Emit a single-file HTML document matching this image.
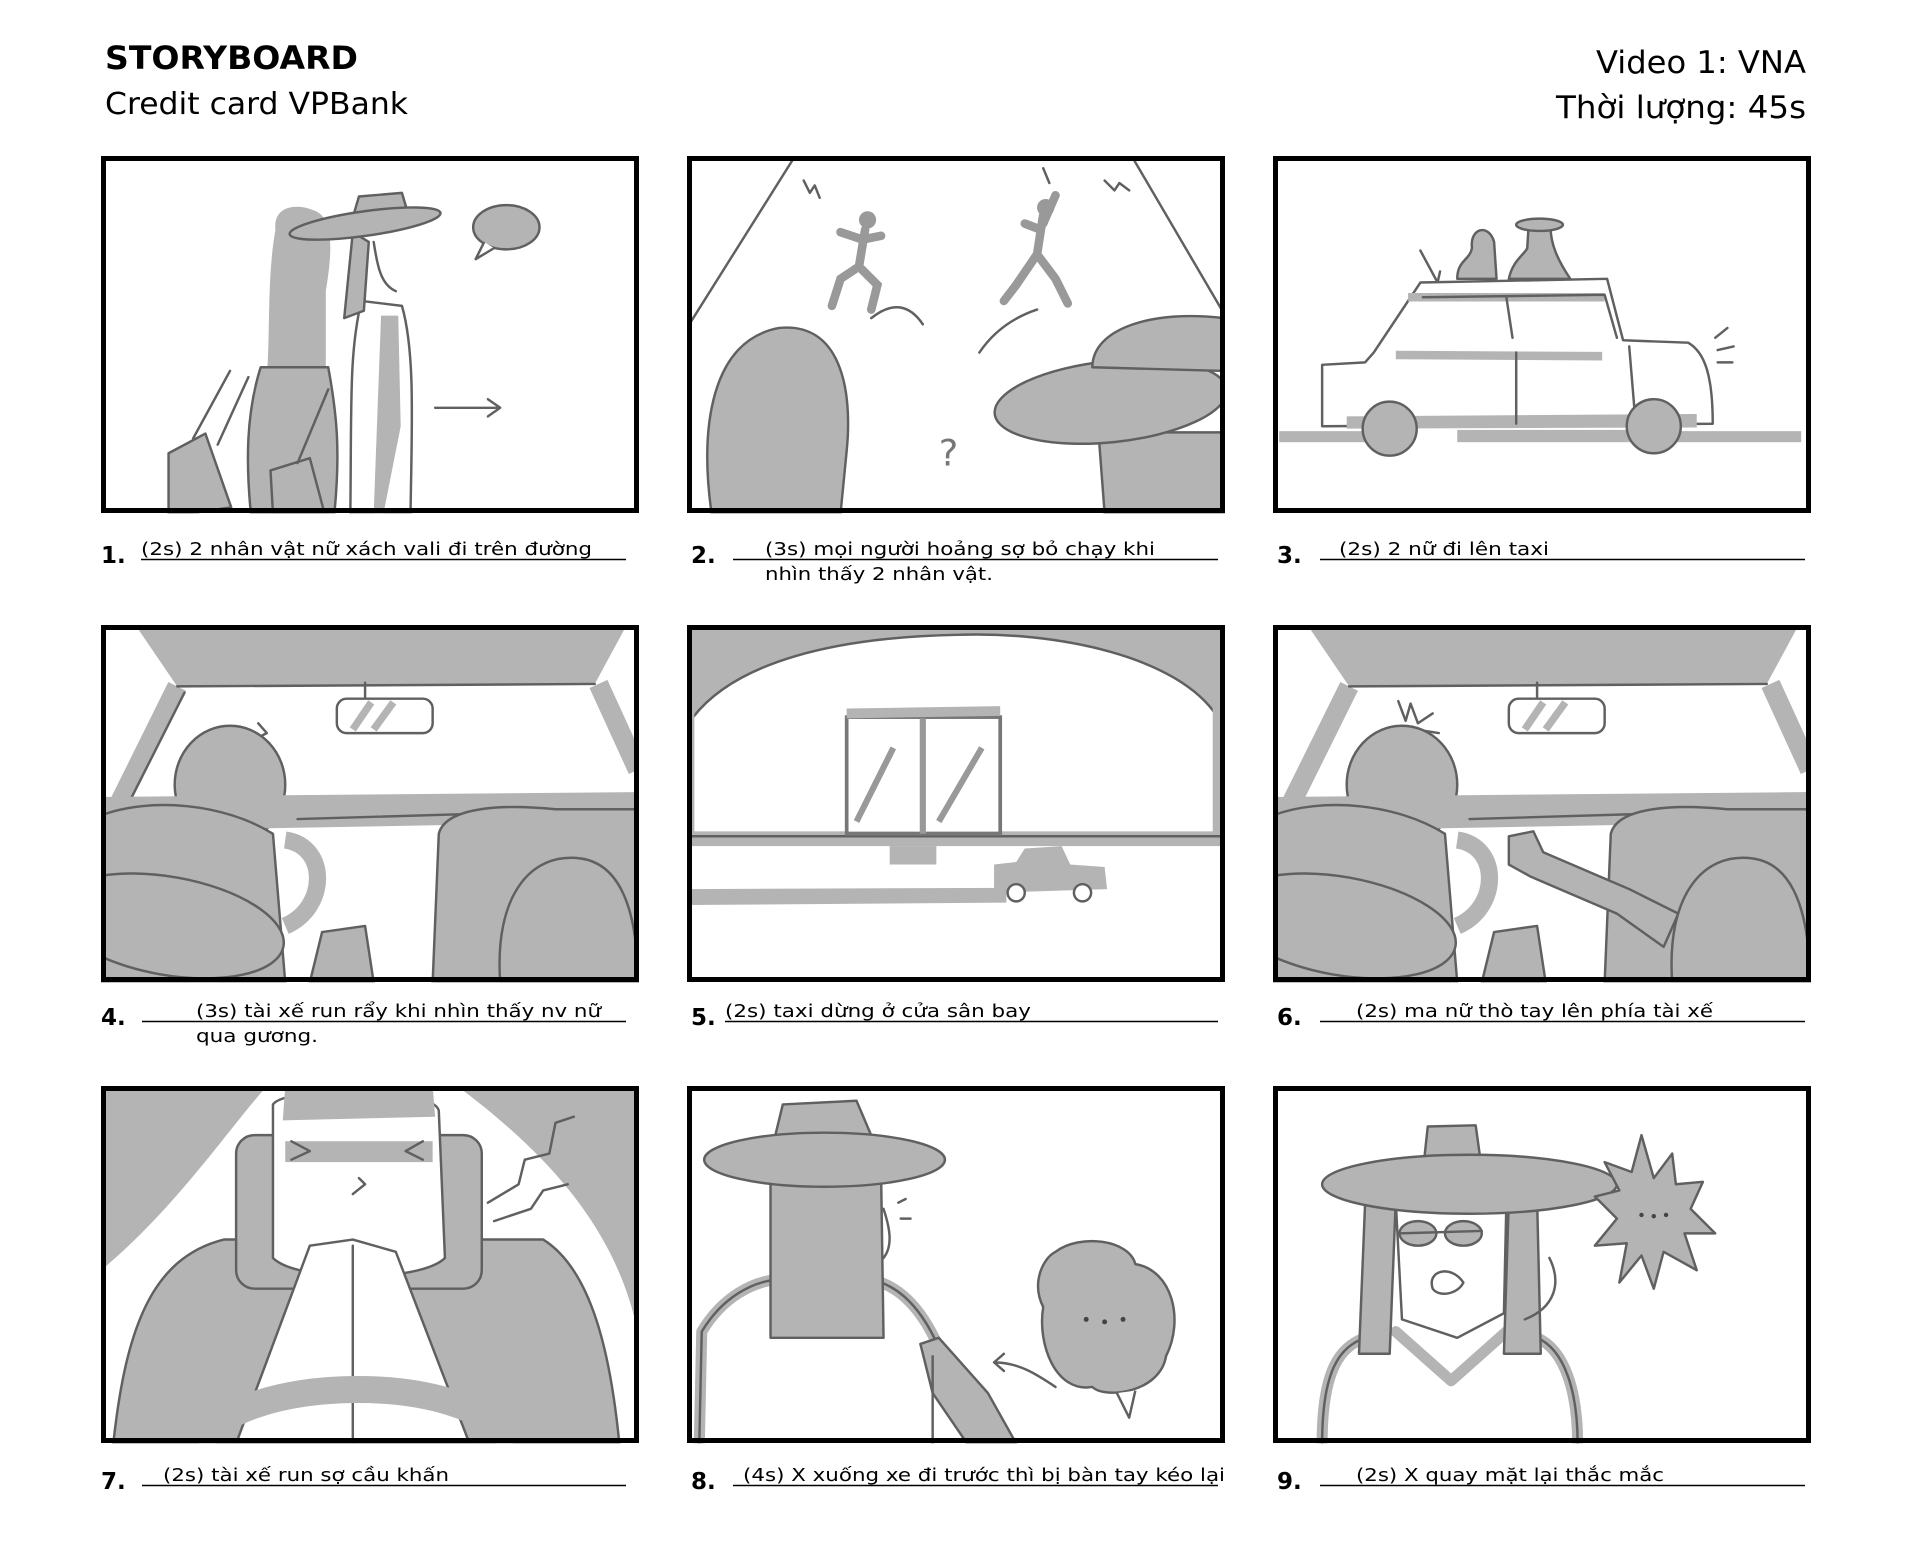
<!DOCTYPE html>
<html><head><meta charset="utf-8"><style>
html,body{margin:0;padding:0;background:#fff}
svg{display:block}
.g{fill:#b4b4b4}
.s{fill:none;stroke:#606060;stroke-width:2;stroke-linecap:round;stroke-linejoin:round}
.gs{fill:#b4b4b4;stroke:#606060;stroke-width:2;stroke-linejoin:round}
.ws{fill:#fff;stroke:#606060;stroke-width:2;stroke-linejoin:round}
.t{font-family:"DejaVu Sans","Liberation Sans",sans-serif;fill:#000}
.cap{font-size:18px}
.num{font-size:23px;font-weight:bold}
</style></head><body>
<svg width="1920" height="1560" viewBox="0 0 1920 1560" xmlns="http://www.w3.org/2000/svg">
<defs>
<clipPath id="pc"><rect x="0" y="0" width="438" height="291"/></clipPath>
</defs>
<rect width="1920" height="1560" fill="#fff"/>

<!-- header -->
<text class="t" x="105" y="69" font-size="32" font-weight="bold" textLength="253" lengthAdjust="spacingAndGlyphs">STORYBOARD</text>
<text class="t" x="105" y="114" font-size="30" textLength="303" lengthAdjust="spacingAndGlyphs">Credit card VPBank</text>
<text class="t" x="1806" y="73" font-size="31" text-anchor="end" textLength="210" lengthAdjust="spacingAndGlyphs">Video 1: VNA</text>
<text class="t" x="1806" y="118" font-size="31" text-anchor="end" textLength="250" lengthAdjust="spacingAndGlyphs">Thời lượng: 45s</text>

<!-- Panel 1 -->
<g transform="translate(101,156) scale(1.2283)"><g clip-path="url(#pc)">
<path class="g" d="M142,60 C140,40 160,38 175,45 C190,52 188,80 183,110 L183,180 L135,180 C138,140 135,100 142,60Z"/>
<path class="gs" d="M130,172 L185,172 C192,210 195,240 190,291 L122,291 C118,250 118,210 130,172Z"/>
<path class="ws" d="M212,118 C202,160 204,200 203,291 L252,291 C253,220 256,160 245,122 Z"/>
<path class="g" d="M228,130 L242,130 L244,220 L230,291 L222,291 Z"/>
<path class="gs" d="M205,62 L198,132 L214,126 L218,70Z"/>
<path class="s" d="M222,70 C225,90 228,105 240,110"/>
<path class="gs" d="M205,50 L210,33 L245,30 L250,47Z"/>
<ellipse class="gs" cx="215" cy="55" rx="62" ry="10" transform="rotate(-8 215 55)"/>
<path class="gs" d="M55,242 L85,226 L106,286 L72,291 L55,291Z"/>
<path class="gs" d="M138,256 L170,246 L182,291 L140,291Z"/>
<path class="s" d="M75,230 L105,175 M160,250 L185,190 M95,235 L120,180"/>
<ellipse class="gs" cx="330" cy="58" rx="27" ry="18"/>
<path class="ws" d="M312,70 L305,84 L320,75"/>
<path class="s" d="M272,205 L325,205 M315,198 L325,205 L315,212"/>
</g></g>
<rect x="103.5" y="158.5" width="533" height="352" fill="none" stroke="#000" stroke-width="5"/>

<!-- Panel 2 -->
<g transform="translate(687,156) scale(1.2283)"><g clip-path="url(#pc)">
<path class="s" d="M0,140 L88,0 M362,0 L437,128"/>
<path class="gs" d="M20,291 C10,220 20,150 75,140 C125,135 135,190 130,240 L125,291Z"/>
<path class="gs" d="M335,225 L437,225 L437,291 L340,291Z"/>
<ellipse class="gs" cx="345" cy="200" rx="95" ry="33" transform="rotate(-6 345 200)"/>
<path class="gs" d="M330,172 C330,140 380,125 437,132 L437,175Z"/>
<path d="M145,60 L140,90 L125,100 L118,122 M140,90 L155,105 L150,125 M143,68 L125,62 M143,68 L158,65" fill="none" stroke="#999" stroke-width="7" stroke-linecap="round"/>
<circle cx="147" cy="52" r="7" fill="#999"/>
<path d="M290,48 L285,80 L268,105 L258,118 M285,80 L300,100 L310,120 M290,55 L300,32 M288,60 L275,55" fill="none" stroke="#999" stroke-width="7" stroke-linecap="round"/>
<circle cx="292" cy="42" r="7" fill="#999"/>
<path class="s" d="M150,132 Q175,112 192,137 M238,160 Q255,135 285,125 M95,20 L100,30 L104,24 L108,34 M290,10 L295,22 M340,20 L348,28 L352,22 L360,28"/>
<text x="205" y="252" font-family="DejaVu Sans" font-size="30" fill="#777">?</text>
</g></g>
<rect x="689.5" y="158.5" width="533" height="352" fill="none" stroke="#000" stroke-width="5"/>

<!-- Panel 3 -->
<g transform="translate(1273,156) scale(1.2283)"><g clip-path="url(#pc)">
<rect class="g" x="5" y="224" width="90" height="9"/>
<rect class="g" x="150" y="223" width="160" height="10"/>
<rect class="g" x="325" y="224" width="105" height="9"/>
<path class="gs" d="M150,100 C150,85 160,85 162,75 C160,58 176,55 180,70 L182,100Z"/>
<path class="gs" d="M192,100 C195,85 205,80 207,75 L208,58 L226,58 C226,72 232,85 242,100Z"/>
<ellipse class="gs" cx="217" cy="56" rx="19" ry="5"/>
<path class="s" d="M120,77 L134,103 M126,103 L134,103 L136,94"/>
<path class="ws" d="M40,170 L75,168 L82,160 L120,103 L272,100 L285,150 L338,152 C352,160 358,180 358,218 L40,220 Z"/>
<path class="g" d="M60,212 L345,210 L345,221 L60,222Z"/>
<path d="M100,162 L268,163 M110,115 L270,115" stroke="#b4b4b4" stroke-width="7" fill="none"/>
<path class="s" d="M122,115 L270,113 L280,148 M190,115 L195,148 M198,160 L198,218 M290,155 L295,215"/>
<circle class="gs" cx="95" cy="222" r="22"/>
<circle class="gs" cx="310" cy="220" r="22"/>
<path class="s" d="M360,148 L370,140 M362,158 L375,155 M362,168 L374,168"/>
</g></g>
<rect x="1275.5" y="158.5" width="533" height="352" fill="none" stroke="#000" stroke-width="5"/>

<!-- Panel 4 -->
<g transform="translate(101,625) scale(1.2283)"><g clip-path="url(#pc)">
<path class="g" d="M28,0 L428,0 L402,48 L62,50Z"/>
<path d="M62,50 L5,165 M405,48 L437,118" stroke="#b4b4b4" stroke-width="16" fill="none"/>
<path class="s" d="M62,50 L402,48 M68,55 L15,160"/>
<path class="s" d="M215,47 L215,60"/>
<rect class="ws" x="192" y="60" width="78" height="28" rx="8"/>
<path d="M205,85 L220,63 M222,85 L238,63" stroke="#b4b4b4" stroke-width="6"/>
<path class="s" d="M128,80 L135,88 L127,92 L134,98"/>
<ellipse class="gs" cx="105" cy="130" rx="45" ry="48"/>
<path class="g" d="M0,140 L437,136 L437,160 L0,168Z"/>
<path class="s" d="M160,158 L430,150"/>
<path class="gs" d="M0,155 C40,140 100,145 140,170 L150,291 L0,291Z"/>
<path d="M150,175 C185,180 185,230 150,245" fill="none" stroke="#b4b4b4" stroke-width="14"/>
<path class="gs" d="M270,291 L275,170 C280,150 320,145 370,150 L437,150 L437,291Z"/>
<path class="gs" d="M170,291 L180,250 L215,245 L222,291Z"/>
<ellipse class="gs" cx="55" cy="245" rx="95" ry="40" transform="rotate(10 55 245)"/>
<path class="gs" d="M325,291 C320,220 350,185 390,190 C430,195 437,250 437,291Z"/>
</g></g>
<rect x="103.5" y="627.5" width="533" height="352" fill="none" stroke="#000" stroke-width="5"/>

<!-- Panel 5 -->
<g transform="translate(687,625) scale(1.2283)"><g clip-path="url(#pc)">
<path class="g" d="M0,0 L437,0 L437,80 C400,25 300,5 220,8 C120,10 40,30 5,75 L0,80Z"/>
<path class="s" d="M5,75 C40,30 120,10 220,8 C300,5 400,25 432,75"/>
<rect class="g" x="0" y="45" width="6" height="130"/>
<rect class="g" x="428" y="45" width="9" height="130"/>
<rect class="g" x="0" y="168" width="437" height="12"/>
<path class="s" d="M0,172 L437,172"/>
<rect x="130" y="75" width="125" height="95" fill="none" stroke="#777" stroke-width="3"/>
<path d="M130,72 L255,70" stroke="#b4b4b4" stroke-width="8"/>
<path d="M138,160 L168,100 M205,160 L240,100 M192,76 L192,170" stroke="#999" stroke-width="5"/>
<rect class="g" x="165" y="180" width="38" height="15"/>
<path class="g" d="M0,215 L260,214 L260,226 L0,228Z"/>
<path class="g" d="M250,195 L268,193 L275,182 L305,180 L312,195 L340,197 L342,215 L250,218Z"/>
<circle class="ws" cx="268" cy="218" r="7"/><circle class="ws" cx="322" cy="218" r="7"/>
</g></g>
<rect x="689.5" y="627.5" width="533" height="352" fill="none" stroke="#000" stroke-width="5"/>

<!-- Panel 6 -->
<g transform="translate(1273,625) scale(1.2283)"><g clip-path="url(#pc)">
<path class="g" d="M28,0 L428,0 L402,48 L62,50Z"/>
<path d="M62,50 L5,165 M405,48 L437,118" stroke="#b4b4b4" stroke-width="16" fill="none"/>
<path class="s" d="M62,50 L402,48"/>
<path class="s" d="M215,47 L215,60"/>
<rect class="ws" x="192" y="60" width="78" height="28" rx="8"/>
<path d="M205,85 L220,63 M222,85 L238,63" stroke="#b4b4b4" stroke-width="6"/>
<path class="s" d="M102,62 L108,78 L112,64 L118,80 L130,72 M122,86 L135,88"/>
<ellipse class="gs" cx="105" cy="130" rx="45" ry="48"/>
<path class="g" d="M0,140 L437,136 L437,160 L0,168Z"/>
<path class="s" d="M160,158 L430,150"/>
<path class="gs" d="M0,155 C40,140 100,145 140,170 L150,291 L0,291Z"/>
<path d="M150,175 C185,180 185,230 150,245" fill="none" stroke="#b4b4b4" stroke-width="14"/>
<path class="gs" d="M270,291 L275,170 C280,150 320,145 370,150 L437,150 L437,291Z"/>
<path class="gs" d="M170,291 L180,250 L215,245 L222,291Z"/>
<ellipse class="gs" cx="55" cy="245" rx="95" ry="40" transform="rotate(10 55 245)"/>
<path class="gs" d="M192,172 L212,168 L220,185 L290,215 L330,235 L318,262 L280,235 L210,205 L192,195Z"/>
<path class="gs" d="M325,291 C320,220 350,185 390,190 C430,195 437,250 437,291Z"/>
</g></g>
<rect x="1275.5" y="627.5" width="533" height="352" fill="none" stroke="#000" stroke-width="5"/>

<!-- Panel 7 -->
<g transform="translate(101,1086) scale(1.2283)"><g clip-path="url(#pc)">
<path class="g" d="M0,0 L135,0 C100,40 60,100 0,150Z"/>
<path class="g" d="M290,0 L437,0 L437,200 C420,120 370,60 290,0Z"/>
<path class="gs" d="M10,291 C20,200 40,140 100,125 L360,125 C400,150 415,220 422,291Z"/>
<rect class="gs" x="110" y="40" width="200" height="125" rx="15"/>
<path class="ws" d="M140,15 C150,0 270,0 275,20 L280,140 C260,160 160,160 140,140Z"/>
<path class="g" d="M150,0 L270,0 L272,25 L148,28Z"/>
<path class="g" d="M150,45 L270,45 L270,62 L150,62Z"/>
<path class="s" d="M155,45 L170,53 L155,60 M262,45 L248,53 L262,60 M210,75 L215,80 L205,88"/>
<path class="ws" d="M170,130 L205,125 L240,135 L300,291 L110,291Z"/>
<path class="s" d="M205,130 L205,291"/>
<path d="M80,291 C110,235 300,230 335,291" fill="none" stroke="#b4b4b4" stroke-width="22"/>
<path class="s" d="M315,95 L340,80 L345,60 L365,55 L370,30 L385,25 M320,110 L350,100 L360,85 L380,80"/>
</g></g>
<rect x="103.5" y="1088.5" width="533" height="352" fill="none" stroke="#000" stroke-width="5"/>

<!-- Panel 8 -->
<g transform="translate(687,1086) scale(1.2283)"><g clip-path="url(#pc)">
<path class="s" d="M10,291 L12,200 C30,170 55,160 70,158 M158,160 C185,170 200,200 208,220" style="stroke:#b4b4b4;stroke-width:9"/>
<path class="s" d="M10,291 L12,200 C30,170 55,160 70,158 M158,160 C185,170 200,200 208,220"/>
<path class="gs" d="M68,70 L158,70 L160,205 L68,205Z"/>
<path class="gs" d="M70,48 L78,15 L138,12 L155,52Z"/>
<ellipse class="gs" cx="112" cy="60" rx="98" ry="22"/>
<path class="s" d="M160,100 C165,115 168,130 160,140 M172,95 L178,92 M174,108 L182,108"/>
<path class="gs" d="M190,210 L205,205 L245,250 L268,291 L228,291 L200,250Z"/>
<path class="s" d="M200,220 L200,291"/>
<path class="gs" d="M300,135 C320,120 360,125 365,145 C395,150 405,190 390,220 C385,250 340,255 330,245 C300,250 285,210 290,180 C280,160 290,140 300,135Z"/>
<path class="ws" d="M350,250 L360,270 L365,248"/>
<circle cx="325" cy="190" r="2" fill="#444"/><circle cx="340" cy="192" r="2" fill="#444"/><circle cx="355" cy="190" r="2" fill="#444"/>
<path class="s" d="M250,225 C270,225 285,235 300,245 M250,225 L258,218 M250,225 L258,232"/>
</g></g>
<rect x="689.5" y="1088.5" width="533" height="352" fill="none" stroke="#000" stroke-width="5"/>

<!-- Panel 9 -->
<g transform="translate(1273,1086) scale(1.2283)"><g clip-path="url(#pc)">
<path class="s" d="M40,291 C40,230 55,212 75,205 M215,205 C238,215 248,250 248,291 M100,200 L145,240 L190,200" style="stroke:#b4b4b4;stroke-width:9"/>
<path class="s" d="M40,291 C40,230 55,212 75,205 M215,205 C238,215 248,250 248,291"/>
<path class="gs" d="M75,95 L100,92 L95,218 L70,218Z"/>
<path class="gs" d="M192,92 L215,92 L218,218 L188,218Z"/>
<path class="ws" d="M100,95 L190,95 L188,185 L150,205 L105,190Z"/>
<ellipse class="gs" cx="118" cy="120" rx="15" ry="10"/>
<ellipse class="gs" cx="155" cy="120" rx="15" ry="10"/>
<path class="s" d="M103,120 L170,118 M130,165 C125,150 145,145 155,160 C150,170 135,172 130,165Z"/>
<path class="gs" d="M122,70 L126,33 L165,32 L170,68Z"/>
<ellipse class="gs" cx="160" cy="80" rx="120" ry="24"/>
<path class="gs" d="M270,62 L292,70 L300,40 L310,75 L325,55 L328,80 L350,78 L340,100 L360,120 L335,120 L345,150 L318,135 L310,165 L300,138 L282,160 L288,128 L262,130 L280,108 L262,90 L282,85Z"/>
<circle cx="300" cy="105" r="1.8" fill="#444"/><circle cx="310" cy="106" r="1.8" fill="#444"/><circle cx="320" cy="105" r="1.8" fill="#444"/>
<path class="s" d="M225,140 C235,160 230,180 205,190"/>
</g></g>
<rect x="1275.5" y="1088.5" width="533" height="352" fill="none" stroke="#000" stroke-width="5"/>

<!-- captions row 1 -->
<text class="t num" x="101" y="563">1.</text>
<line x1="141" y1="559.5" x2="626" y2="559.5" stroke="#000" stroke-width="1.5"/>
<text class="t cap" x="141" y="555" textLength="451" lengthAdjust="spacingAndGlyphs">(2s) 2 nhân vật nữ xách vali đi trên đường</text>

<text class="t num" x="691" y="563">2.</text>
<line x1="733" y1="559.5" x2="1218" y2="559.5" stroke="#000" stroke-width="1.5"/>
<text class="t cap" x="765" y="555" textLength="390" lengthAdjust="spacingAndGlyphs">(3s) mọi người hoảng sợ bỏ chạy khi</text>
<text class="t cap" x="765" y="580" textLength="228" lengthAdjust="spacingAndGlyphs">nhìn thấy 2 nhân vật.</text>

<text class="t num" x="1277" y="563">3.</text>
<line x1="1320" y1="559.5" x2="1805" y2="559.5" stroke="#000" stroke-width="1.5"/>
<text class="t cap" x="1339" y="555" textLength="210" lengthAdjust="spacingAndGlyphs">(2s) 2 nữ đi lên taxi</text>

<!-- captions row 2 -->
<text class="t num" x="101" y="1025">4.</text>
<line x1="142" y1="1021.5" x2="626" y2="1021.5" stroke="#000" stroke-width="1.5"/>
<text class="t cap" x="196" y="1017" textLength="405" lengthAdjust="spacingAndGlyphs">(3s) tài xế run rẩy khi nhìn thấy nv nữ</text>
<text class="t cap" x="196" y="1042" textLength="122" lengthAdjust="spacingAndGlyphs">qua gương.</text>

<text class="t num" x="691" y="1025">5.</text>
<line x1="725" y1="1021.5" x2="1218" y2="1021.5" stroke="#000" stroke-width="1.5"/>
<text class="t cap" x="725" y="1017" textLength="306" lengthAdjust="spacingAndGlyphs">(2s) taxi dừng ở cửa sân bay</text>

<text class="t num" x="1277" y="1025">6.</text>
<line x1="1320" y1="1021.5" x2="1805" y2="1021.5" stroke="#000" stroke-width="1.5"/>
<text class="t cap" x="1356" y="1017" textLength="357" lengthAdjust="spacingAndGlyphs">(2s) ma nữ thò tay lên phía tài xế</text>

<!-- captions row 3 -->
<text class="t num" x="101" y="1489">7.</text>
<line x1="142" y1="1485.5" x2="626" y2="1485.5" stroke="#000" stroke-width="1.5"/>
<text class="t cap" x="163" y="1481" textLength="286" lengthAdjust="spacingAndGlyphs">(2s) tài xế run sợ cầu khấn</text>

<text class="t num" x="691" y="1489">8.</text>
<line x1="733" y1="1485.5" x2="1218" y2="1485.5" stroke="#000" stroke-width="1.5"/>
<text class="t cap" x="743" y="1481" textLength="482" lengthAdjust="spacingAndGlyphs">(4s) X xuống xe đi trước thì bị bàn tay kéo lại</text>

<text class="t num" x="1277" y="1489">9.</text>
<line x1="1320" y1="1485.5" x2="1805" y2="1485.5" stroke="#000" stroke-width="1.5"/>
<text class="t cap" x="1356" y="1481" textLength="308" lengthAdjust="spacingAndGlyphs">(2s) X quay mặt lại thắc mắc</text>
</svg>
</body></html>
